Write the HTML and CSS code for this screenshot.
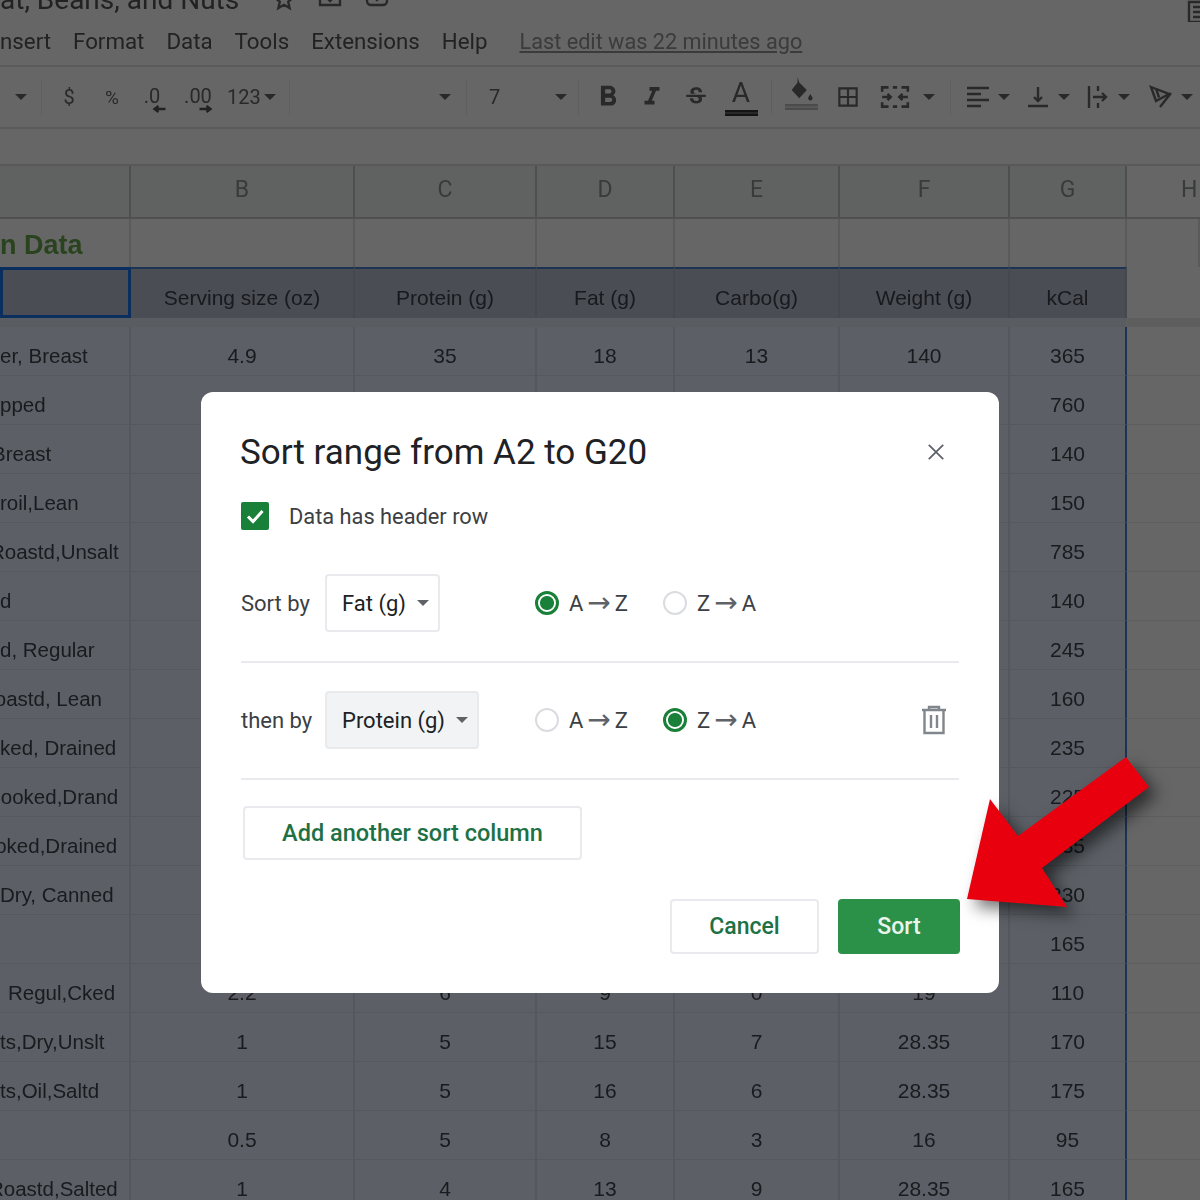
FILE: index.html
```html
<!DOCTYPE html>
<html lang="en">
<head>
  <meta charset="UTF-8" />
  <title>Sort range</title>
  <link rel="stylesheet" href="styles.css">
</head>
<body>
  <div class="sheet">
    <div class="title-bar">
      <div class="doc-title">at, Beans, and Nuts</div>
      <svg class="doc-icon star" viewBox="0 0 24 24"><path d="M12 3l2.6 6 6.4.6-4.800 4.200 1.400 6.300L12 16.800 6.400 20.100l1.400-6.300L3 9.600 9.400 9z" /></svg>
      <svg class="doc-icon move" viewBox="0 0 24 24"><path d="M2 6h20v14H2zM12 9v7M9 13l3 3 3-3" /></svg>
      <svg class="doc-icon cloud" viewBox="0 0 24 24"><path d="M6 20h12a4 4 0 0 0 4-4V8H2v8a4 4 0 0 0 4 4zM12 9v6M9 12l3 3 3-3" /></svg>
      <svg class="doc-icon notes" viewBox="0 0 24 24"><path d="M3 2h18v20H3zM7 7h10M7 12h10M7 17h10" /></svg>
    </div>

    <div class="menu-bar">
      <span>nsert</span><span>Format</span><span>Data</span><span>Tools</span><span>Extensions</span><span>Help</span>
      <a class="last-edit">Last edit was 22 minutes ago</a>
    </div>

    <div class="toolbar">
      <div class="tool"><i class="caret"></i></div>
      <div class="sep"></div>
      <div class="tool">$</div>
      <div class="tool pct">%</div>
      <div class="tool dec">.0<svg class="dec-arrow" viewBox="0 0 14 8"><path d="M13 4H3M6 1L2 4l4 3" /></svg></div>
      <div class="tool dec">.00<svg class="dec-arrow" viewBox="0 0 14 8"><path d="M1 4h10M8 1l4 3-4 3" /></svg></div>
      <div class="tool fmt">123<i class="caret"></i></div>
      <div class="sep"></div>
      <div class="tool font-pick"><i class="caret"></i></div>
      <div class="sep"></div>
      <div class="tool size-pick"><span>7</span><i class="caret"></i></div>
      <div class="sep"></div>
      <div class="tool"><svg class="ico big" viewBox="0 0 24 24"><path class="fill" d="M15.600 10.790c.97-.67 1.650-1.770 1.650-2.790 0-2.260-1.750-4-4-4H7v14h7.040c2.090 0 3.710-1.700 3.710-3.790 0-1.520-.86-2.820-2.150-3.420zM10 6.500h3c.83 0 1.500.67 1.500 1.500s-.67 1.500-1.500 1.500h-3v-3zm3.500 9H10v-3h3.500c.83 0 1.500.67 1.500 1.500s-.67 1.500-1.500 1.500z" /></svg></div>
      <div class="tool"><svg class="ico big" viewBox="0 0 24 24"><path class="fill" d="M10 4v3h2.210l-3.420 8H6v3h8v-3h-2.210l3.420-8H18V4z" /></svg></div>
      <div class="tool"><svg class="ico" viewBox="0 0 24 24"><path class="fill" d="M6.850 7.080C6.850 4.370 9.450 3 12.240 3c1.640 0 3 .49 3.900 1.280.77.65 1.460 1.730 1.460 3.240h-3.010c0-.31-.05-.59-.15-.85-.29-.86-1.200-1.280-2.250-1.280-1.860 0-2.340 1.020-2.340 1.700 0 .48.25.88.74 1.210.38.25.77.48 1.410.7H7.390c-.21-.34-.54-.89-.54-1.920zM21 12v-2H3v2h9.620c1.150.45 1.960.75 1.960 1.970 0 1-.81 1.670-2.280 1.670-1.540 0-2.930-.54-2.930-2.510H6.400c0 .55.08 1.130.24 1.580.81 2.290 3.290 3.300 5.670 3.300 2.270 0 5.300-.89 5.300-4.050 0-.3-.01-1.160-.48-1.960H21z" /></svg></div>
      <div class="tool text-color"><span>A</span><i class="color-bar"></i></div>
      <div></div>
      <div class="sep"></div>
      <div class="tool fill-color"><svg class="ico small" viewBox="0 0 24 24"><path class="fill" d="M9 1l1.500 4.500L17 12l-6.500 7L4 12l5-6.500zM20 15.500l1.800 3a1.900 1.900 0 1 1-3.600 0z" /></svg><i class="color-bar pale"></i></div>
      <div class="tool"><svg class="ico" viewBox="0 0 24 24"><path class="fill" d="M3 3v18h18V3H3zm8 16H5v-6h6v6zm0-8H5V5h6v6zm8 8h-6v-6h6v6zm0-8h-6V5h6v6z" /></svg></div>
      <div class="tool"><svg class="ico wide" viewBox="0 0 28 24"><path d="M2 7V3h6M20 3h6v4M2 17v4h6M20 21h6v-4M2 12h8M7 9l3 3-3 3M26 12h-8M21 9l-3 3 3 3M12 3h4M12 21h4" /></svg></div>
      <div class="tool"><i class="caret"></i></div>
      <div></div>
      <div class="sep"></div>
      <div class="tool combo"><svg class="ico" viewBox="0 0 24 24"><path d="M1 3h22M1 9h14M1 15h22M1 21h14" /></svg><i class="caret"></i></div>
      <div class="tool combo"><svg class="ico" viewBox="0 0 24 24"><path d="M12 2v14M8 12l4 4 4-4M2 21h20" /></svg><i class="caret"></i></div>
      <div class="tool combo"><svg class="ico" viewBox="0 0 24 24"><path d="M3 1v22M12 1v5M12 18v5M7 12h13M16 8l4 4-4 4" /></svg><i class="caret"></i></div>
      <div class="tool combo"><svg class="ico" viewBox="0 0 24 24"><path d="M2 2l18 7-13 7zM7 3.500l3 9M22 8L11 22" /></svg><i class="caret"></i></div>
    </div>

    <div class="formula-bar"></div>

    <div class="cols col-head">
      <div></div><div>B</div><div>C</div><div>D</div><div>E</div><div>F</div><div>G</div><div class="h-col">H</div>
    </div>
    <div class="cols title-row">
      <div class="sheet-title">n Data</div><div></div><div></div><div></div><div></div><div></div><div></div><div></div>
    </div>
    <div class="cols head-row">
      <div class="active-cell"></div><div>Serving size (oz)</div><div>Protein (g)</div><div>Fat (g)</div><div>Carbo(g)</div><div>Weight (g)</div><div>kCal</div><div class="blank"></div>
    </div>
    <div class="freeze-band"><div></div></div>

    <div class="cols row"><div>er, Breast</div><div>4.9</div><div>35</div><div>18</div><div>13</div><div>140</div><div>365</div><div></div></div>
    <div class="cols row"><div>pped</div><div>8</div><div>45</div><div>62</div><div>9</div><div>140</div><div>760</div><div></div></div>
    <div class="cols row"><div class="cut-8">Breast</div><div>3</div><div>26</div><div>3</div><div>0</div><div>85</div><div>140</div><div></div></div>
    <div class="cols row"><div>roil,Lean</div><div>3</div><div>24</div><div>5</div><div>0</div><div>85</div><div>150</div><div></div></div>
    <div class="cols row"><div class="cut-10">Roastd,Unsalt</div><div>4.8</div><div>32</div><div>66</div><div>22</div><div>135</div><div>785</div><div></div></div>
    <div class="cols row"><div>d</div><div>3</div><div>25</div><div>4</div><div>0</div><div>85</div><div>140</div><div></div></div>
    <div class="cols row"><div>d, Regular</div><div>3</div><div>20</div><div>18</div><div>0</div><div>85</div><div>245</div><div></div></div>
    <div class="cols row"><div class="cut-20">Roastd, Lean</div><div>3</div><div>24</div><div>7</div><div>0</div><div>85</div><div>160</div><div></div></div>
    <div class="cols row"><div>ked, Drained</div><div>6.3</div><div>15</div><div>1</div><div>42</div><div>180</div><div>235</div><div></div></div>
    <div class="cols row"><div class="cut-14">Cooked,Drand</div><div>6.3</div><div>15</div><div>1</div><div>40</div><div>180</div><div>225</div><div></div></div>
    <div class="cols row"><div class="cut-31">Cooked,Drained</div><div>6.3</div><div>15</div><div>1</div><div>41</div><div>180</div><div>235</div><div></div></div>
    <div class="cols row"><div>Dry, Canned</div><div>6.3</div><div>15</div><div>1</div><div>40</div><div>180</div><div>230</div><div></div></div>
    <div class="cols row"><div></div><div>6.3</div><div>14</div><div>1</div><div>30</div><div>180</div><div>165</div><div></div></div>
    <div class="cols row"><div class="lead">Regul,Cked</div><div>2.2</div><div>6</div><div>9</div><div>0</div><div>19</div><div>110</div><div></div></div>
    <div class="cols row"><div>ts,Dry,Unslt</div><div>1</div><div>5</div><div>15</div><div>7</div><div>28.35</div><div>170</div><div></div></div>
    <div class="cols row"><div>ts,Oil,Saltd</div><div>1</div><div>5</div><div>16</div><div>6</div><div>28.35</div><div>175</div><div></div></div>
    <div class="cols row"><div></div><div>0.5</div><div>5</div><div>8</div><div>3</div><div>16</div><div>95</div><div></div></div>
    <div class="cols row"><div class="cut-11">Roastd,Salted</div><div>1</div><div>4</div><div>13</div><div>9</div><div>28.35</div><div>165</div><div></div></div>
  </div>

  <div class="backdrop">
    <div class="modal">
      <div class="modal-head">
        <h1>Sort range from A2 to G20</h1>
        <svg class="close" viewBox="0 0 20 20"><path d="M2 2l16 16M18 2L2 18" /></svg>
      </div>

      <div class="check-row">
        <span class="checkbox"><svg viewBox="0 0 28 28"><path d="M7 14.500l5 5 9.500-10.500" /></svg></span>
        <span>Data has header row</span>
      </div>

      <div class="sort-row first">
        <span class="sort-label">Sort by</span>
        <div><div class="select">Fat (g)<i class="caret"></i></div></div>
        <div class="radio-opt"><i class="radio on"></i>A<span class="arr">→</span>Z</div>
        <div class="radio-opt"><i class="radio"></i>Z<span class="arr">→</span>A</div>
      </div>

      <div class="sort-row">
        <span class="sort-label">then by</span>
        <div><div class="select open">Protein (g)<i class="caret"></i></div></div>
        <div class="radio-opt"><i class="radio"></i>A<span class="arr">→</span>Z</div>
        <div class="radio-opt"><i class="radio on"></i>Z<span class="arr">→</span>A</div>
        <svg class="trash" viewBox="0 0 26 30"><path d="M1 5h24M8 5V2h10v3M3.500 5v23h19V5M10 10v13M16 10v13" /></svg>
      </div>

      <button class="btn add-btn">Add another sort column</button>

      <div class="modal-foot">
        <button class="btn cancel-btn">Cancel</button>
        <button class="btn sort-btn">Sort</button>
      </div>
    </div>
  </div>

  <svg class="arrow" viewBox="0 0 1200 1200"><polygon points="967,899 990,799 1018,836 1126,757 1149,787 1042,868 1067,907" /></svg>
</body>
</html>
```

FILE: styles.css
```css
* {
  box-sizing: border-box;
}
html, body {
  margin: 0;
  height: 1200px;
  overflow: hidden;
  background: #fff;
}
body {
  position: relative;
  width: 1200px;
  font-family: Roboto, "Liberation Sans", sans-serif;
}

/* sheet behind the dialog */
.sheet {
  height: 1200px;
  overflow: hidden;
  filter: blur(0.6px);
  color: #555;
}
.title-bar {
  position: relative;
  height: 22px;
  overflow: hidden;
}
.doc-title {
  position: absolute;
  left: 0;
  bottom: 7px;
  font-size: 28px;
  line-height: 30px;
  white-space: nowrap;
  color: #555;
}
.doc-icon {
  position: absolute;
  width: 24px;
  height: 24px;
  fill: none;
  stroke: #666;
  stroke-width: 2.4;
}
.star { left: 272px; top: -12px; }
.move { left: 318px; top: -15px; }
.cloud { left: 365px; top: -15px; }
.notes { left: 1186px; top: 0; }

.menu-bar {
  display: flex;
  align-items: center;
  gap: 22px;
  height: 45px;
  padding-bottom: 5px;
  font-size: 22.300px;
  border-bottom: 2px solid #e4e4e4;
}
.last-edit {
  margin-left: 10px;
  font-size: 21.700px;
  color: #939393;
  text-decoration: underline;
}

.toolbar {
  display: grid;
  grid-template-columns: 41px 1px 54px 32px 48px 44px 60px 9px 1px 176px 1px 111px 1px 58px 30px 58px 32px 14px 1px 58px 36px 58px 10px 16px 1px 74px 46px 74px 52px;
  align-items: center;
  height: 62px;
  font-size: 20px;
  color: #666;
  border-bottom: 2px solid #e4e4e4;
}
.tool {
  display: flex;
  justify-content: center;
  align-items: center;
  position: relative;
  height: 40px;
}
.sep {
  height: 36px;
  background: #ececec;
}
.fmt {
  gap: 3px;
  grid-column: span 2;
  justify-content: flex-start;
  padding-left: 7px;
}
.font-pick {
  justify-content: flex-end;
  padding-right: 15px;
}
.size-pick {
  justify-content: space-between;
  padding: 0 11px 0 22px;
}
.pct { font-size: 19px; }
.dec { align-items: flex-start; padding-top: 7px; font-size: 20px; }
.dec-arrow {
  position: absolute;
  left: 50%;
  bottom: 4px;
  width: 15px;
  height: 8px;
  fill: none;
  stroke: #555;
  stroke-width: 2.4;
}
.ico {
  width: 26px;
  height: 26px;
  fill: none;
  stroke: #666;
  stroke-width: 2.4;
}
.ico.big { width: 34px; height: 34px; }
.ico.wide { width: 30px; }
.ico.small { width: 28px; height: 28px; margin-top: -8px; }
.fill { fill: #666; stroke: none; }
.text-color, .fill-color {
  flex-direction: column;
  height: 50px;
  font-size: 28px;
}
.text-color span { line-height: 30px; }
.color-bar {
  display: block;
  width: 33px;
  height: 6px;
  margin-top: 2px;
  border-top: 2px solid #333;
  border-bottom: 2px solid #333;
  background: #666;
}
.color-bar.pale {
  border-color: #bbb;
  background: #ddd;
  margin-top: 0;
}
.combo { gap: 8px; }
.combo .ico { width: 24px; }
.caret {
  display: inline-block;
  width: 0;
  height: 0;
  flex: none;
  border: 6px solid transparent;
  border-top-color: #666;
  border-bottom: 0;
}

.formula-bar {
  height: 37px;
  border-bottom: 2px solid #dedede;
}

.cols {
  display: grid;
  grid-template-columns: 131px 224px 182px 138px 165px 170px 117px 73px;
}
.cols > div {
  display: flex;
  justify-content: center;
  align-items: flex-end;
  border-right: 2px solid #e0e0e0;
  white-space: nowrap;
  overflow: hidden;
}
.col-head {
  height: 53px;
  background: #eff6f5;
  font-size: 23px;
  color: #8f9393;
  border-bottom: 2px solid #c8c8c8;
}
.col-head > div {
  align-items: center;
  padding-bottom: 4px;
  border-right-color: #c4c4c4;
}
.col-head .h-col { justify-content: flex-start; padding-left: 54px; background: #fff; border: 0; }
.title-row {
  height: 48px;
}
.cols > .sheet-title {
  justify-content: flex-start;
  align-items: center;
  padding-top: 4px;
  font: bold 27px "Liberation Sans", sans-serif;
  color: #6aa84f;
}
.head-row {
  height: 51px;
  font: 21px "Liberation Sans", sans-serif;
  color: #3d4149;
}
.head-row > div {
  padding-bottom: 8px;
  background: #b9c0d2;
  border-top: 2px solid #4a80d0;
  border-right-color: #adb4c6;
}
.head-row > .active-cell {
  border: 3px solid #1a73e8;
}
.head-row > .blank {
  background: #fff;
  border: 0;
}
.freeze-band {
  height: 9px;
  background: #ebebeb;
}
.freeze-band div {
  width: 1126px;
  height: 9px;
  background: #dfe8f6;
}
.row {
  height: 49px;
  font: 21px "Liberation Sans", sans-serif;
  color: #40454e;
}
.row > div {
  padding-bottom: 7px;
  background: #e6effe;
  border-bottom: 1px solid #d4dced;
  border-right-color: #d2daeb;
}
.row > div:first-child {
  justify-content: flex-start;
  font-size: 20.500px;
}
.row > div:nth-child(7) {
  border-right: 2px solid #4a80d0;
}
.row > div:last-child {
  background: #fff;
  border: 0;
  border-bottom: 1px solid #ececec;
}
/* first column runs off the left edge of the crop */
.row > .cut-8 { text-indent: -8px; }
.row > .cut-10 { text-indent: -10px; }
.row > .cut-11 { text-indent: -11px; }
.row > .cut-14 { text-indent: -14px; }
.row > .cut-20 { text-indent: -20px; }
.row > .cut-31 { text-indent: -31px; }
.row > .lead { padding-left: 8px; }

/* dialog */
.backdrop {
  position: absolute;
  inset: 0;
  padding-top: 392px;
  background: rgba(0, 0, 0, 0.6);
}
.modal {
  width: 798px;
  height: 601px;
  margin: 0 auto;
  padding: 36px 40px 0;
  background: #fff;
  border-radius: 12px;
  color: #3c4043;
  font-size: 22px;
}
.modal-head {
  display: flex;
  justify-content: space-between;
  align-items: center;
  height: 48px;
}
h1 {
  margin: 0 0 0 -1px;
  font-size: 35px;
  font-weight: 400;
  color: #202124;
}
.close {
  width: 18px;
  height: 18px;
  margin-right: 14px;
  fill: none;
  stroke: #5f6368;
  stroke-width: 2;
}
.check-row {
  display: flex;
  align-items: center;
  gap: 20px;
  height: 36px;
  margin-top: 22px;
  font-size: 21.800px;
}
.checkbox {
  width: 28px;
  height: 28px;
  border-radius: 2px;
  background: #188038;
}
.checkbox svg {
  display: block;
  fill: none;
  stroke: #fff;
  stroke-width: 3;
}
.sort-row {
  display: grid;
  grid-template-columns: 84px 210px 128px 1fr auto;
  align-items: center;
  padding: 28px 0 29px;
  border-bottom: 2px solid #e8eaed;
}
.sort-row.first {
  margin-top: 40px;
  padding-top: 0;
}
.select {
  display: inline-flex;
  align-items: center;
  gap: 11px;
  height: 58px;
  padding: 0 9px 0 15px;
  border: 2px solid #e8eaed;
  border-radius: 4px;
  font-size: 22px;
  color: #202124;
}
.select.open {
  background: #f1f3f4;
}
.select .caret {
  border-top-color: #5f6368;
}
.radio-opt {
  display: flex;
  align-items: center;
  gap: 10px;
}
.radio-opt .arr {
  margin: 0 -6px;
  font: 28px/22px "DejaVu Sans", sans-serif;
  color: #5f6368;
}
.radio {
  width: 24px;
  height: 24px;
  border: 2px solid #dadce0;
  border-radius: 50%;
}
.radio.on {
  border: 3px solid #188038;
  background: radial-gradient(circle, #188038 0 6.500px, #fff 7.500px);
}
.trash {
  width: 26px;
  height: 30px;
  margin-right: 12px;
  fill: none;
  stroke: #80868b;
  stroke-width: 2.4;
}
.btn {
  height: 55px;
  border: 2px solid #e8eaed;
  border-radius: 4px;
  background: #fff;
  color: #1e7145;
  font: 500 23px Roboto, sans-serif;
}
.add-btn {
  display: block;
  width: 339px;
  height: 54px;
  margin: 26px 0 0 2px;
  font-size: 23.500px;
}
.modal-foot {
  display: flex;
  justify-content: flex-end;
  gap: 19px;
  margin: 39px -1px 0 0;
}
.cancel-btn { width: 149px; }
.sort-btn {
  width: 122px;
  border: 0;
  background: #2b9048;
  color: #e9f5ec;
}

.arrow {
  position: absolute;
  left: 0;
  top: 0;
  width: 1200px;
  height: 1200px;
  fill: #e8000f;
  filter: drop-shadow(8px 8px 8px rgba(0, 0, 0, 0.55));
}
```
